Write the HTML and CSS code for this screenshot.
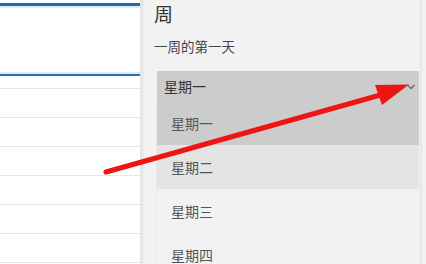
FILE: index.html
```html
<!DOCTYPE html>
<html lang="zh">
<head>
<meta charset="utf-8">
<link rel="stylesheet" href="styles.css">
</head>
<body>
<div class="screen">
  <div class="left">
    <div class="band band-top"></div>
    <div class="blank"></div>
    <div class="band band-mid"></div>
    <div class="rows">
      <div class="row"></div>
      <div class="row"></div>
      <div class="row"></div>
      <div class="row"></div>
      <div class="row"></div>
      <div class="row"></div>
      <div class="row"></div>
    </div>
  </div>
  <div class="divider"></div>
  <div class="panel">
    <div class="title">周</div>
    <div class="label">一周的第一天</div>
    <div class="combo">
      <div class="box">
        <span>星期一</span>
        <svg class="chev" width="10" height="6" viewBox="0 0 10 6"><polyline points="1.5,1 5,4.5 8.5,1" fill="none" stroke="#666" stroke-width="1.3"/></svg>
      </div>
      <div class="list">
        <div class="item selected">星期一</div>
        <div class="item hover">星期二</div>
        <div class="item">星期三</div>
        <div class="item">星期四</div>
      </div>
    </div>
  </div>
  <svg class="arrow" width="426" height="264" viewBox="0 0 426 264">
    <line x1="106" y1="172" x2="384" y2="94" stroke="#ee1515" stroke-width="5" stroke-linecap="round"/>
    <polygon points="409,84.5 375,85 382,105" fill="#ee1515"/>
  </svg>
</div>
</body>
</html>
```
FILE: styles.css
```css
html, body {
  margin: 0;
  padding: 0;
}
body {
  width: 426px;
  height: 264px;
  overflow: hidden;
  font-family: "Noto Sans CJK SC", "Noto Sans", sans-serif;
  background: #f2f2f2;
}
.screen {
  position: relative;
  display: flex;
  width: 426px;
  height: 264px;
  overflow: hidden;
}
.left {
  width: 140px;
  flex: none;
  background: #ffffff;
  display: flex;
  flex-direction: column;
  overflow: hidden;
}
.left > div {
  flex: none;
}
.band-top {
  margin-top: 3px;
  border-top: 3px solid #1f6bb3;
  height: 2px;
  background: #d9ecf8;
}
.blank {
  height: 64px;
}
.band-mid {
  height: 2px;
  background: #d9ecf8;
  border-bottom: 2px solid #2a6fb2;
}
.rows {
  display: flex;
  flex-direction: column;
  padding-top: 12px;
}
.row {
  flex: none;
  height: 28px;
  border-top: 1px solid #e6e6e6;
}
.divider {
  width: 4px;
  flex: none;
  background: linear-gradient(to right, #e2e2e2, #ececec);
}
.panel {
  flex: 1;
  padding: 4px 0 0 10px;
  background: #f2f2f2;
  border-right: 2px solid #e6e6e6;
  margin-right: 4px;
}
.title {
  font-size: 19px;
  line-height: 20px;
  color: #333;
}
.label {
  margin-top: 13px;
  font-size: 13.5px;
  line-height: 18px;
  color: #444;
}
.combo {
  margin-top: 16px;
  margin-left: 3px;
  width: 262px;
}
.box {
  height: 30px;
  background: #cccccc;
  display: flex;
  align-items: center;
  justify-content: space-between;
  padding: 0 3px 0 7px;
  font-size: 14px;
  color: #333;
}
.box span {
  line-height: 26px;
}
.chev {
  margin-top: 2px;
}
.list {
  display: flex;
  flex-direction: column;
  border-left: 1px solid #e9e9e9;
  margin-left: -1px;
}
.item {
  height: 44px;
  display: flex;
  align-items: center;
  padding-left: 14px;
  font-size: 14px;
  color: #555;
}
.item.selected {
  background: #cccccc;
}
.item.hover {
  background: #e4e4e4;
}
.arrow {
  position: absolute;
  left: 0;
  top: 0;
  pointer-events: none;
}
```
